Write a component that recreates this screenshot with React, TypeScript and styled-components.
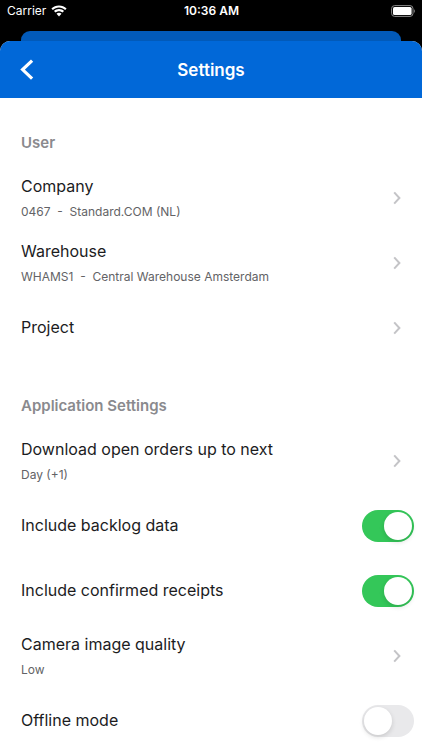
import React, { useId, useState } from "react";
import styled, { createGlobalStyle } from "styled-components";

const GlobalStyle = createGlobalStyle`
  *, *::before, *::after { box-sizing: border-box; }
  body {
    margin: 0;
    background: #000;
    font-family: Inter, "Liberation Sans", sans-serif;
    -webkit-font-smoothing: antialiased;
  }
`;

const Screen = styled.div`
  display: flex;
  flex-direction: column;
  height: 100vh;
  overflow: hidden;
  background: #000;
`;

const StatusBar = styled.div`
  display: grid;
  grid-template-columns: 1fr auto 1fr;
  align-items: center;
  height: 22px;
  margin-bottom: 9px;
  padding: 0 6px 0 7px;
  color: #fff;
  font-size: 12px;
  line-height: 22px;
`;

const Carrier = styled.div`
  display: flex;
  align-items: center;
  gap: 5px;
`;

const Clock = styled.time`
  font-weight: 600;
`;

const BatterySlot = styled.div`
  display: flex;
  justify-content: flex-end;
`;

const BackSheet = styled.div`
  flex: none;
  height: 10px;
  margin: 0 21px;
  border-radius: 9px 9px 0 0;
  background: #025ab9;
`;

const Sheet = styled.main`
  display: flex;
  flex: 1;
  flex-direction: column;
  min-height: 0;
  overflow: hidden;
  border-radius: 10px 10px 0 0;
  background: #fff;
`;

const Header = styled.header`
  display: grid;
  flex: none;
  grid-template-columns: 44px 1fr 44px;
  align-items: center;
  height: 57px;
  background: #0168d8;
`;

const BackButton = styled.button`
  display: flex;
  align-items: center;
  justify-content: flex-end;
  height: 44px;
  padding: 0 10px 0 0;
  border: 0;
  background: none;
  color: #fff;
  cursor: pointer;
`;

const Title = styled.h1`
  margin: 0;
  color: #fff;
  font-size: 17px;
  font-weight: 600;
  line-height: 24px;
  text-align: center;
`;

const Content = styled.div`
  flex: 1;
  min-height: 0;
  overflow-y: auto;
  scrollbar-width: none;
`;

const Section = styled.section`
  padding-top: 33px;

  & + & {
    padding-top: 34px;
  }
`;

const SectionTitle = styled.h2`
  margin: 0 0 10px;
  padding: 0 21px;
  color: #8a8a8e;
  font-size: 15px;
  font-weight: 600;
  line-height: 24px;
`;

const LinkRow = styled.button`
  display: flex;
  align-items: center;
  justify-content: space-between;
  width: 100%;
  height: 65px;
  padding: 0 20px 0 21px;
  border: 0;
  background: none;
  font-family: inherit;
  text-align: left;
  cursor: pointer;
`;

const SwitchRow = styled.div`
  display: flex;
  align-items: center;
  justify-content: space-between;
  height: 65px;
  padding: 0 8px 0 21px;
`;

const RowText = styled.span`
  display: flex;
  flex-direction: column;
  gap: 5px;
  padding-bottom: 1px;
`;

const RowTitle = styled.span`
  color: #1c1c1e;
  font-size: 16px;
  line-height: 24px;
`;

const RowDetail = styled.span`
  color: #636366;
  font-size: 12px;
  line-height: 18px;
  white-space: pre;
`;

const SwitchLabel = styled.label`
  padding-bottom: 2px;
  color: #1c1c1e;
  font-size: 16px;
  line-height: 24px;
`;

const Switch = styled.input`
  appearance: none;
  display: flex;
  flex: none;
  align-items: center;
  width: 52px;
  height: 32px;
  margin: 0;
  padding: 2px;
  border-radius: 16px;
  background: #e9e9eb;
  cursor: pointer;

  &::before {
    content: "";
    width: 28px;
    height: 28px;
    border-radius: 50%;
    background: #fff;
    box-shadow: 0 2px 5px rgba(0, 0, 0, 0.14);
  }

  &:checked {
    justify-content: flex-end;
    background: #34c759;
  }
`;

const WifiIcon = () => (
  <svg width="16" height="12" viewBox="0 0 16 12" fill="#fff" aria-hidden="true">
    <path d="M8 0.5C5.1 0.5 2.4 1.6 0.4 3.4L1.9 5C3.5 3.5 5.6 2.6 8 2.6S12.5 3.5 14.1 5L15.6 3.4C13.6 1.6 10.9 0.5 8 0.5Z" />
    <path d="M8 4.1C6.1 4.1 4.3 4.8 3 6L4.5 7.6C5.4 6.8 6.6 6.2 8 6.2S10.6 6.8 11.5 7.6L13 6C11.7 4.8 9.9 4.1 8 4.1Z" />
    <path d="M8 7.7C7 7.7 6.2 8.1 5.5 8.7L8 11.4L10.5 8.7C9.8 8.1 9 7.7 8 7.7Z" />
  </svg>
);

const BatteryIcon = () => (
  <svg width="25" height="12" viewBox="0 0 25 12" aria-label="Battery full" role="img">
    <rect x="0.6" y="0.6" width="21.4" height="10.8" rx="3" fill="none" stroke="#8b8b8b" strokeWidth="1" />
    <rect x="2" y="2" width="18.6" height="8" rx="1.6" fill="#fff" />
    <path d="M23.2 4.2C24.3 4.7 24.3 7.3 23.2 7.8Z" fill="#8b8b8b" />
  </svg>
);

const BackIcon = () => (
  <svg width="14" height="22" viewBox="0 0 14 22" fill="none" aria-hidden="true">
    <path d="M12.1 1.6L2.6 10.6L12.1 19.6" stroke="#fff" strokeWidth="3.2" />
  </svg>
);

const ChevronIcon = () => (
  <svg width="9" height="14" viewBox="0 0 9 14" fill="none" aria-hidden="true">
    <path d="M1.2 1.4L6.4 7L1.2 12.6" stroke="#c4c4c7" strokeWidth="2" />
  </svg>
);

type LinkItemProps = { title: string; detail?: string };

const LinkItem = ({ title, detail }: LinkItemProps) => (
  <LinkRow type="button">
    <RowText>
      <RowTitle>{title}</RowTitle>
      {detail && <RowDetail>{detail}</RowDetail>}
    </RowText>
    <ChevronIcon />
  </LinkRow>
);

type SwitchItemProps = { title: string; initial?: boolean };

const SwitchItem = ({ title, initial = false }: SwitchItemProps) => {
  const id = useId();
  const [on, setOn] = useState(initial);
  return (
    <SwitchRow>
      <SwitchLabel htmlFor={id}>{title}</SwitchLabel>
      <Switch
        id={id}
        type="checkbox"
        role="switch"
        checked={on}
        onChange={(event) => setOn(event.target.checked)}
      />
    </SwitchRow>
  );
};

export default function App() {
  return (
    <>
      <GlobalStyle />
      <Screen>
        <StatusBar>
          <Carrier>
            Carrier
            <WifiIcon />
          </Carrier>
          <Clock>10:36 AM</Clock>
          <BatterySlot>
            <BatteryIcon />
          </BatterySlot>
        </StatusBar>
        <BackSheet />
        <Sheet>
          <Header>
            <BackButton type="button" aria-label="Back">
              <BackIcon />
            </BackButton>
            <Title>Settings</Title>
          </Header>
          <Content>
            <Section>
              <SectionTitle>User</SectionTitle>
              <LinkItem title="Company" detail="0467  -  Standard.COM (NL)" />
              <LinkItem title="Warehouse" detail="WHAMS1  -  Central Warehouse Amsterdam" />
              <LinkItem title="Project" />
            </Section>
            <Section>
              <SectionTitle>Application Settings</SectionTitle>
              <LinkItem title="Download open orders up to next" detail="Day (+1)" />
              <SwitchItem title="Include backlog data" initial />
              <SwitchItem title="Include confirmed receipts" initial />
              <LinkItem title="Camera image quality" detail="Low" />
              <SwitchItem title="Offline mode" />
            </Section>
          </Content>
        </Sheet>
      </Screen>
    </>
  );
}
